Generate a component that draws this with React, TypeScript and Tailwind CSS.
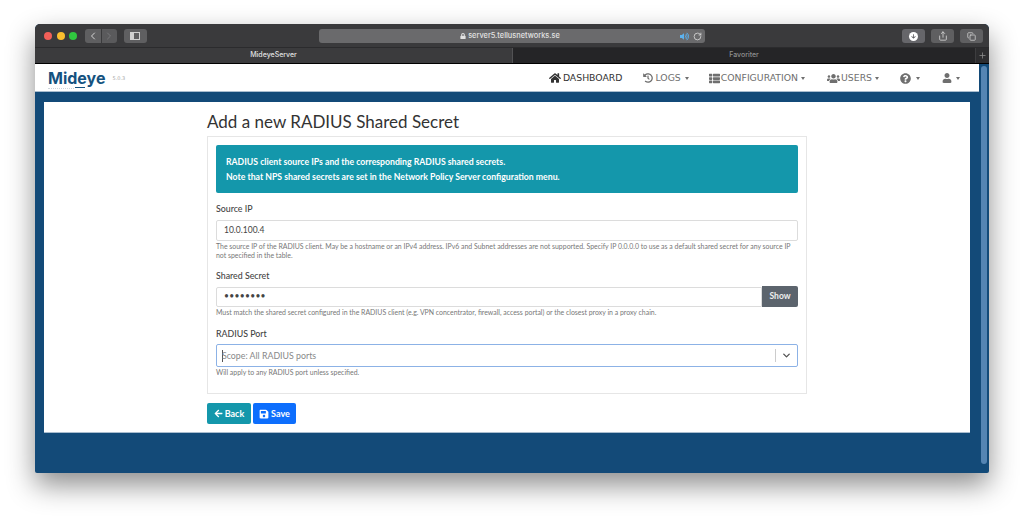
import { FaArrowLeft, FaHistory, FaHome, FaLock, FaQuestionCircle, FaSave, FaThList, FaUser, FaUsers, FaVolumeUp, FaArrowDown } from 'react-icons/fa'
import { LuChevronDown, LuChevronLeft, LuChevronRight, LuCopy, LuPlus, LuRotateCw, LuShare } from 'react-icons/lu'

const Caret = () => <span className="ml-[2px] h-0 w-0 border-x-[2.5px] border-t-[3px] border-x-transparent border-t-[#6f6f6f]" />

function BrowserChrome() {
  return (
    <>
      {/* Toolbar */}
      <div className="flex h-[23px] items-center bg-[#3a3a3c] pl-[9px] pr-[6px] pt-[1px] [font-family:Inter,sans-serif]">
        <div className="flex gap-[4.5px]">
          <span className="h-[8px] w-[8px] rounded-full bg-[#f25f58]" />
          <span className="h-[8px] w-[8px] rounded-full bg-[#fbbe2e]" />
          <span className="h-[8px] w-[8px] rounded-full bg-[#30c83f]" />
        </div>
        <div className="ml-[7.5px] flex gap-[1px]">
          <span className="flex h-[14px] w-[16px] items-center justify-center rounded-l-[3px] bg-[#5f5f61] text-[#d5d5d5]"><LuChevronLeft size={12} /></span>
          <span className="flex h-[14px] w-[15px] items-center justify-center rounded-r-[3px] bg-[#5a5a5c] text-[#77777a]"><LuChevronRight size={12} /></span>
        </div>
        <span className="ml-[7px] flex h-[14px] w-[23px] items-center justify-center rounded-[3px] bg-[#5f5f61]">
          <span className="flex h-[8px] w-[10px] border border-[#d0d0d0]"><span className="h-full w-[3px] bg-[#d0d0d0]" /></span>
        </span>
        <div className="ml-[172px] flex h-[14px] w-[386px] items-center rounded-[3px] bg-[#6a6a6c] pr-[3px] text-[#e2e2e2]">
          <span className="w-[22px]" />
          <div className="flex flex-1 items-center justify-center gap-[2px] text-[7.4px] font-medium">
            <FaLock className="text-[6px]" />
            <span>server5.tellusnetworks.se</span>
          </div>
          <FaVolumeUp className="text-[9px] text-[#5cb2ee]" />
          <LuRotateCw size={9} className="ml-[4px]" />
        </div>
        <div className="ml-auto flex gap-[6px]">
          <span className="flex h-[14px] w-[23px] items-center justify-center rounded-[3px] bg-[#66666a]">
            <span className="flex h-[9px] w-[9px] items-center justify-center rounded-full bg-white text-[#55555a]"><FaArrowDown className="text-[5px]" /></span>
          </span>
          <span className="flex h-[14px] w-[23px] items-center justify-center rounded-[3px] bg-[#5f5f61] text-[#d5d5d5]"><LuShare size={10} /></span>
          <span className="flex h-[14px] w-[23px] items-center justify-center rounded-[3px] bg-[#5f5f61] text-[#d5d5d5]"><LuCopy size={9} /></span>
        </div>
      </div>
      {/* Tabs */}
      <div className="flex h-[17px] border-b border-black border-t border-t-[#2b2b2d] text-[7px] font-medium [font-family:Inter,sans-serif]">
        <div className="flex w-[477px] items-center justify-center bg-[#3b3b3d] text-[#e0e0e0]">MideyeServer</div>
        <div className="flex flex-1 items-center justify-center border-l border-[#525254] bg-[#252527] text-[#8f8f8f]">Favoriter</div>
        <div className="flex w-[14px] items-center justify-center border-l border-[#3d3d3f] bg-[#2d2d2f] text-[#8f8f8f]"><LuPlus size={9} /></div>
      </div>
    </>
  )
}

function NavBar() {
  return (
    <div className="flex h-[28px] items-center border-b border-[#a9bdcf] bg-white pl-[13px] pr-[19px] pt-[1px] text-[9.3px] text-[#6f6f6f] [font-family:'DejaVu_Sans',sans-serif]">
      <div className="flex items-center">
        <span className="relative text-[16px] font-bold leading-none text-[#15527f] [font-family:Inter,sans-serif]">
          Mideye
          <span className="absolute bottom-[-2px] left-[27px] h-[1.5px] w-[10px] bg-[#15527f]" />
          <span className="absolute bottom-[-3px] left-0 w-[26px] border-b border-dotted border-[#cfd6dc]" />
        </span>
        <span className="ml-[7px] mt-[2px] text-[5px] text-[#a8a8a8]">5.0.3</span>
      </div>
      <div className="ml-auto flex items-center">
        <span className="flex items-center gap-[2px] text-[#333]"><FaHome className="text-[12px]" />DASHBOARD</span>
        <span className="ml-[21px] flex items-center gap-[2px]"><FaHistory className="text-[10px]" />LOGS<Caret /></span>
        <span className="ml-[20px] flex items-center gap-[1px]"><FaThList className="text-[11px]" />CONFIGURATION<Caret /></span>
        <span className="ml-[22px] flex items-center gap-[1px]"><FaUsers className="text-[13px]" />USERS<Caret /></span>
        <span className="ml-[21px] flex items-center gap-[3px]"><FaQuestionCircle className="text-[11px]" /><Caret /></span>
        <span className="ml-[22px] flex items-center gap-[2px]"><FaUser className="text-[10px]" /><Caret /></span>
      </div>
    </div>
  )
}

function Form() {
  return (
    <div className="mx-auto w-[600px] text-[#666] [font-family:Lato,sans-serif]">
      <h1 className="h-[34px] pt-[8.5px] text-[17px] leading-[22px] text-[#333]">Add a new RADIUS Shared Secret</h1>
      <div className="h-[258px] border border-[#e6e6e6] px-[8px] pt-[8px]">
        <div className="h-[48px] rounded-[2px] bg-[#1497ab] px-[10px] pt-[9px] text-[8.7px] font-bold leading-[15px] text-white">
          <p>RADIUS client source IPs and the corresponding RADIUS shared secrets.</p>
          <p>Note that NPS shared secrets are set in the Network Policy Server configuration menu.</p>
        </div>
        <p className="mt-[9px] h-[13px] text-[8.8px] font-medium leading-[13px] text-[#444]">Source IP</p>
        <div className="mt-[5px] flex h-[21px] items-center rounded-[2px] border border-[#dcdcdc] px-[7px] text-[8.5px] text-[#444]">10.0.100.4</div>
        <p className="mt-[1px] text-[6.93px] leading-[9px] text-[#777]">
          The source IP of the RADIUS client. May be a hostname or an IPv4 address. IPv6 and Subnet addresses are not supported. Specify IP 0.0.0.0 to use as a default shared secret for any source IP<br />not specified in the table.
        </p>
        <p className="mt-[9px] h-[13px] text-[8.8px] font-medium leading-[13px] text-[#444]">Shared Secret</p>
        <div className="mt-[4px] flex h-[21px] items-center">
          <div className="flex h-[20px] flex-1 items-center rounded-l-[2px] border border-[#dcdcdc] px-[7px] text-[8.5px] tracking-[0.3px] text-[#444]">••••••••</div>
          <div className="flex h-[21px] w-[36px] items-center justify-center rounded-r-[2px] bg-[#5c646d] text-[8.5px] font-bold text-[#eee]">Show</div>
        </div>
        <p className="mt-[1px] text-[6.93px] leading-[9px] text-[#777]">
          Must match the shared secret configured in the RADIUS client (e.g. VPN concentrator, firewall, access portal) or the closest proxy in a proxy chain.
        </p>
        <p className="mt-[10px] h-[13px] text-[8.8px] font-medium leading-[13px] text-[#444]">RADIUS Port</p>
        <div className="mt-[4px] flex h-[23px] items-center rounded-[2px] border border-[#8cb2e6] pl-[5px] text-[8.8px] text-[#888]">
          <span className="mr-[-1px] h-[12px] w-px bg-[#555]" />
          <span>Scope: All RADIUS ports</span>
          <span className="ml-auto h-[13px] w-px bg-[#ccc]" />
          <LuChevronDown size={11} strokeWidth={3} className="mx-[5px] text-[#555]" />
        </div>
        <p className="mt-[1px] text-[6.93px] leading-[9px] text-[#777]">Will apply to any RADIUS port unless specified.</p>
      </div>
      <div className="mt-[9px] flex gap-[2px] text-[9px] font-bold text-white">
        <span className="flex h-[21px] w-[44px] items-center justify-center gap-[2px] rounded-[2px] bg-[#1497ab]"><FaArrowLeft className="text-[9px]" />Back</span>
        <span className="flex h-[21px] w-[43px] items-center justify-center gap-[2px] rounded-[2px] bg-[#0d6efd]"><FaSave className="text-[10px]" />Save</span>
      </div>
    </div>
  )
}

export default function App() {
  return (
    <div className="h-[520px] w-[1024px] overflow-hidden bg-white pl-[35px] pt-[24px]">
      <div className="flex h-[449px] w-[954px] flex-col overflow-hidden rounded-t-[5px] rounded-b-[2px] bg-[#134a78] shadow-[0_12px_28px_rgba(0,0,0,0.45)]">
        <BrowserChrome />
        <div className="flex min-h-0 flex-1">
          <div className="flex min-w-0 flex-1 flex-col">
            <NavBar />
            <div className="flex-1 px-[9px] pt-[10px]">
              <div className="h-[331px] border-b border-[#a9bdcf] bg-white">
                <Form />
              </div>
            </div>
          </div>
          <div className="w-[10px] px-[2px] py-[2px]">
            <div className="h-[398px] w-[6px] rounded-full bg-[#5585b3]" />
          </div>
        </div>
      </div>
    </div>
  )
}
